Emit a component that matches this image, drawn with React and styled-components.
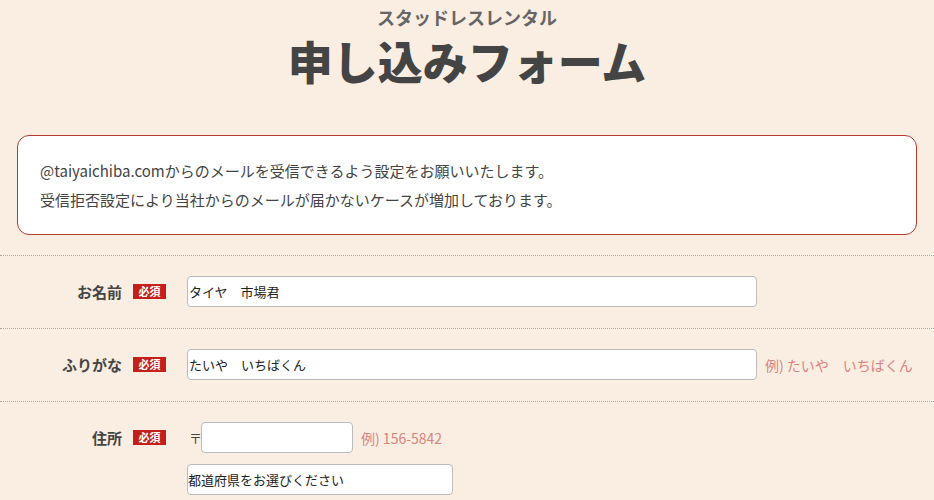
import React from "react";
import styled, { createGlobalStyle } from "styled-components";

const GlobalStyle = createGlobalStyle`
  html, body {
    margin: 0;
    padding: 0;
    background: #faeee2;
  }
  body {
    font-family: "Noto Sans CJK JP", "Noto Sans", sans-serif;
    color: #444;
  }
`;

const Page = styled.div`
  width: 934px;
  overflow: hidden;
`;

const Header = styled.header`
  text-align: center;
  padding-top: 6px;
`;

const SubTitle = styled.p`
  margin: 0;
  font-size: 18px;
  line-height: 22px;
  font-weight: 700;
  color: #666;
`;

const Title = styled.h1`
  margin: 8px 0 0;
  font-size: 45px;
  line-height: 50px;
  font-weight: 900;
  color: #444;
`;

const Notice = styled.div`
  margin: 49px 17px 20px;
  padding: 20px 22px;
  background: #fff;
  border: 1px solid #b5392c;
  border-radius: 12px;
  font-size: 15px;
  line-height: 29px;
  color: #444;
`;

const Row = styled.div`
  display: grid;
  grid-template-columns: 166px 1fr;
  column-gap: 21px;
  align-items: ${(p) => (p.$top ? "start" : "center")};
  padding: 20px 0 21px;
  border-top: 1px dotted #aaa;
`;

const LabelCell = styled.div`
  display: flex;
  justify-content: flex-end;
  align-items: center;
  gap: 11px;
  height: 31px;
`;

const Label = styled.span`
  font-size: 15px;
  font-weight: 700;
  color: #444;
`;

const Badge = styled.span`
  display: inline-flex;
  align-items: center;
  justify-content: center;
  width: 33px;
  height: 15px;
  background: #c4201b;
  color: #fff;
  font-size: 11px;
  font-weight: 700;
  line-height: 1;
`;

const Field = styled.div`
  display: flex;
  flex-direction: column;
  gap: 11px;
`;

const Line = styled.div`
  display: flex;
  align-items: center;
`;

const Input = styled.input`
  box-sizing: border-box;
  width: ${(p) => p.$w || 570}px;
  height: 31px;
  padding: 0 1px;
  border: 1px solid #bbb;
  border-radius: 4px;
  background: #fff;
  font-family: "Noto Sans CJK JP", sans-serif;
  font-size: 13px;
  color: #222;
  outline: none;
`;

const Select = styled.select`
  box-sizing: border-box;
  width: 266px;
  height: 31px;
  padding: 0;
  border: 1px solid #bbb;
  border-radius: 4px;
  background: #fff;
  appearance: none;
  font-family: "Noto Sans CJK JP", sans-serif;
  font-size: 13px;
  color: #222;
`;

const Hint = styled.span`
  margin-left: 8px;
  font-size: 14px;
  color: #d9847f;
  white-space: nowrap;
`;

const Postal = styled.span`
  width: 12px;
  padding-left: 2px;
  font-size: 13px;
  color: #444;
`;

export default function App() {
  return (
    <Page>
      <GlobalStyle />
      <Header>
        <SubTitle>スタッドレスレンタル</SubTitle>
        <Title>申し込みフォーム</Title>
      </Header>

      <Notice>
        @taiyaichiba.comからのメールを受信できるよう設定をお願いいたします。
        <br />
        受信拒否設定により当社からのメールが届かないケースが増加しております。
      </Notice>

      <Row>
        <LabelCell>
          <Label>お名前</Label>
          <Badge>必須</Badge>
        </LabelCell>
        <Line>
          <Input defaultValue="タイヤ　市場君" />
        </Line>
      </Row>

      <Row>
        <LabelCell>
          <Label>ふりがな</Label>
          <Badge>必須</Badge>
        </LabelCell>
        <Line>
          <Input defaultValue="たいや　いちばくん" />
          <Hint>例) たいや　いちばくん</Hint>
        </Line>
      </Row>

      <Row $top>
        <LabelCell>
          <Label>住所</Label>
          <Badge>必須</Badge>
        </LabelCell>
        <Field>
          <Line>
            <Postal>〒</Postal>
            <Input $w={152} />
            <Hint>例) 156-5842</Hint>
          </Line>
          <Line>
            <Select defaultValue="">
              <option value="">都道府県をお選びください</option>
            </Select>
          </Line>
        </Field>
      </Row>
    </Page>
  );
}
